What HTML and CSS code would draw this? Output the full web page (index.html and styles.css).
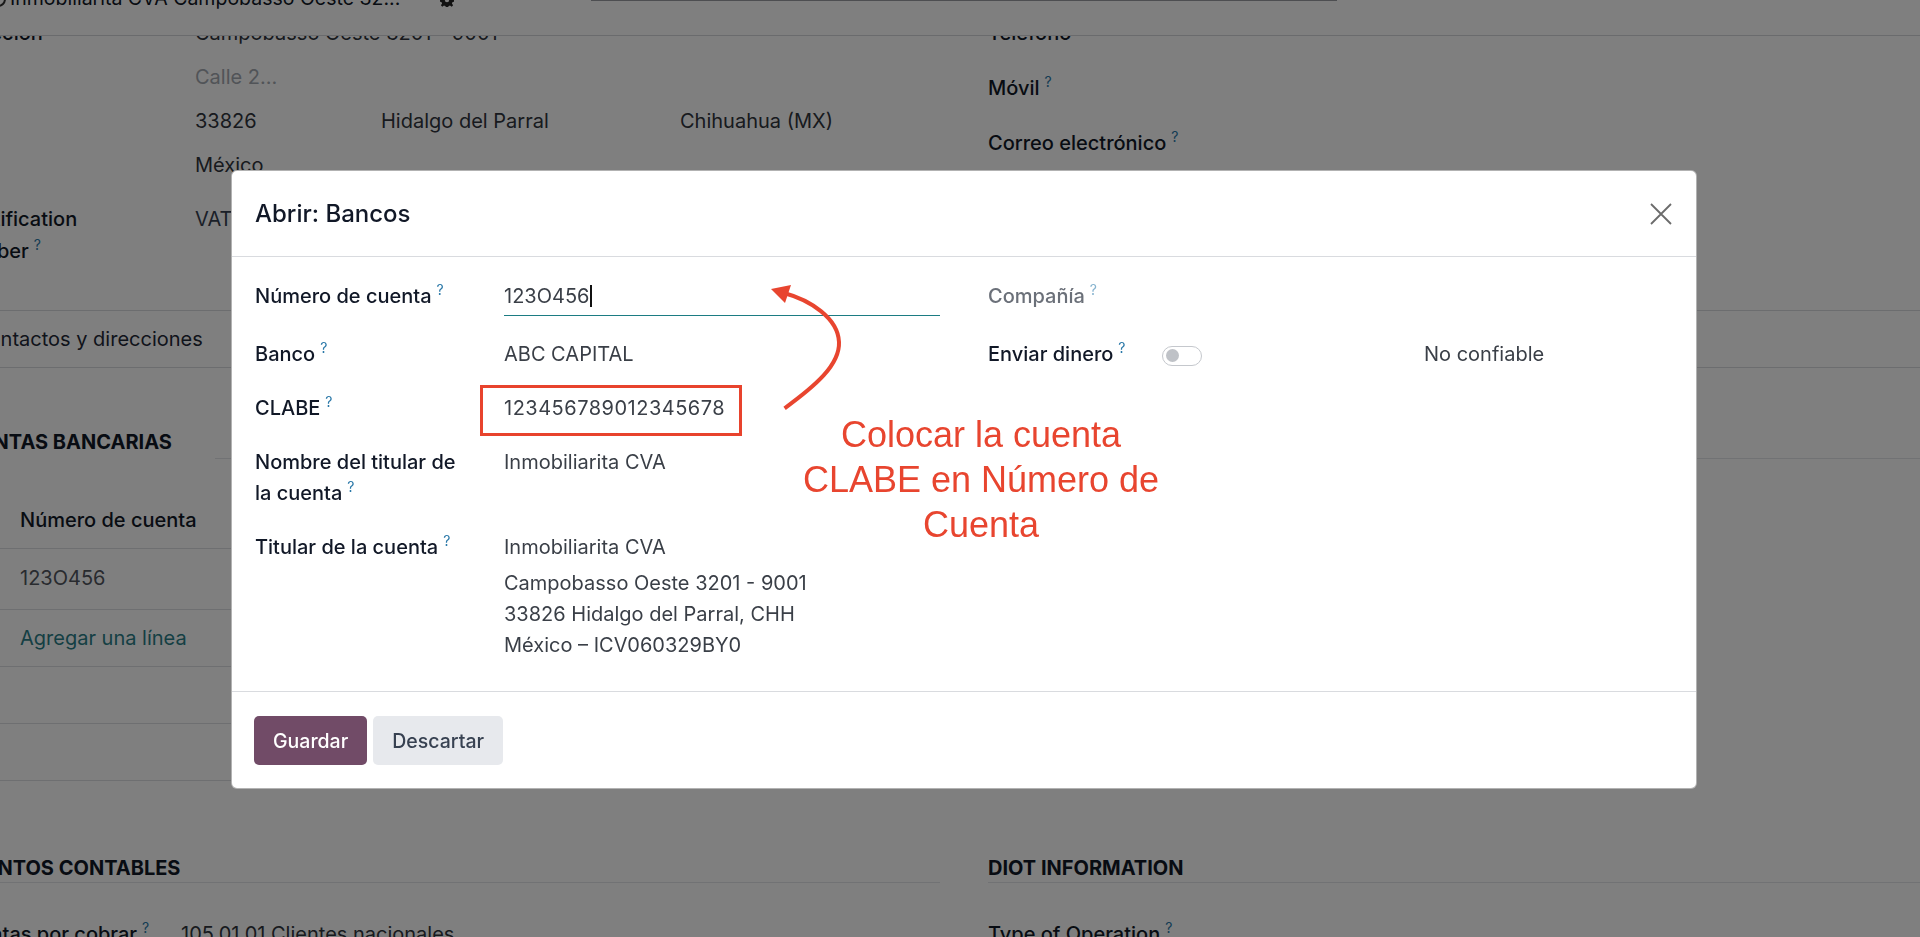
FILE: index.html
```html
<!DOCTYPE html>
<html lang="es">
<head>
    <meta charset="UTF-8">
    <meta name="viewport" content="width=device-width, initial-scale=1.0">
    <title>Abrir: Bancos</title>
    <link rel="stylesheet" href="styles.css">
</head>
<body>
    <!-- barra del registro (fija arriba) -->
    <div class="record-bar">
        <div class="record-name">
            <span class="record-icon"></span>
            <span>Inmobiliarita CVA Campobasso Oeste 32...</span>
        </div>
        <svg class="gear" width="14" height="14" viewBox="0 0 14 14">
            <path d="M6 0h2l.4 2 1.6.7 1.7-1.2 1.4 1.4-1.2 1.7.7 1.6 2 .4v2l-2 .4-.7 1.6 1.2 1.7-1.4 1.4-1.7-1.2-1.6.7-.4 2H6l-.4-2-1.6-.7-1.7 1.2-1.4-1.4 1.2-1.7-.7-1.6-2-.4V6l2-.4.7-1.6-1.2-1.7 1.4-1.4 1.7 1.2 1.6-.7z" fill="#222"/>
            <circle cx="7" cy="7" r="2.2" fill="#fff"/>
        </svg>
        <span class="record-field"></span>
    </div>

    <!-- hoja del formulario de contacto -->
    <div class="sheet">
        <div class="top-groups">
            <div class="group-left">
                <div class="field">
                    <div class="label addr-label">Dirección</div>
                    <div class="address">
                        <div class="addr-line">Campobasso Oeste 3201 - 9001</div>
                        <div class="addr-line placeholder">Calle 2...</div>
                        <div class="addr-line addr-split">
                            <span>33826</span>
                            <span>Hidalgo del Parral</span>
                            <span>Chihuahua (MX)</span>
                        </div>
                        <div class="addr-line">México</div>
                    </div>
                </div>
                <div class="field field-vat">
                    <div class="label">Identification Number<sup>?</sup></div>
                    <div>VAT</div>
                </div>
            </div>
            <div class="group-right">
                <div class="rfield">Teléfono</div>
                <div class="rfield">Móvil<sup>?</sup></div>
                <div class="rfield">Correo electrónico<sup>?</sup></div>
            </div>
        </div>

        <div class="tabs">
            <span class="tab">Contactos y direcciones</span>
        </div>

        <div class="bank">
            <div class="section-title">Cuentas bancarias</div>
            <div class="bank-rule"></div>
            <div class="bank-table">
                <div class="t-head">Número de cuenta</div>
                <div class="t-row t-row-first">123O456</div>
                <div class="t-row t-add">Agregar una línea</div>
                <div class="t-row"></div>
                <div class="t-row"></div>
            </div>
        </div>

        <div class="acct">
            <div class="acct-col">
                <div class="section-title acct-title">Asientos contables</div>
                <div class="acct-field">
                    <div class="label">Cuentas por cobrar<sup>?</sup></div>
                    <div>105.01.01 Clientes nacionales</div>
                </div>
            </div>
            <div class="acct-col">
                <div class="section-title acct-title">DIOT Information</div>
                <div class="acct-field">
                    <div class="label">Type of Operation<sup>?</sup></div>
                    <div></div>
                </div>
            </div>
        </div>
    </div>

    <div class="overlay"></div>

    <!-- diálogo -->
    <div class="modal">
        <div class="modal-header">
            <div class="modal-title">Abrir: Bancos</div>
            <svg class="close" width="22" height="22" viewBox="0 0 22 22">
                <path d="M1 1L21 21M21 1L1 21" stroke="#6b6b6b" stroke-width="1.8" fill="none"/>
            </svg>
        </div>
        <div class="modal-body">
            <div class="col">
                <div class="f-row">
                    <div class="f-label">Número de cuenta<sup>?</sup></div>
                    <div class="f-input">123O456<span class="caret"></span></div>
                </div>
                <div class="f-row">
                    <div class="f-label">Banco<sup>?</sup></div>
                    <div class="f-value">ABC CAPITAL</div>
                </div>
                <div class="f-row">
                    <div class="f-label">CLABE<sup>?</sup></div>
                    <div class="f-value"><span class="marked">123456789012345678</span></div>
                </div>
                <div class="f-row">
                    <div class="f-label">Nombre del titular de la cuenta<sup>?</sup></div>
                    <div class="f-value">Inmobiliarita CVA</div>
                </div>
                <div class="f-row">
                    <div class="f-label">Titular de la cuenta<sup>?</sup></div>
                    <div class="f-value">
                        <div class="holder-name">Inmobiliarita CVA</div>
                        <div>Campobasso Oeste 3201 - 9001</div>
                        <div>33826 Hidalgo del Parral, CHH</div>
                        <div>México – ICV060329BY0</div>
                    </div>
                </div>
            </div>
            <div class="col">
                <div class="f-row f-row-right f-row-tall">
                    <div class="f-label muted">Compañía<sup>?</sup></div>
                    <div></div>
                </div>
                <div class="f-row f-row-right">
                    <div class="f-label">Enviar dinero<sup>?</sup></div>
                    <div class="f-value send">
                        <span class="toggle"><span class="knob"></span></span>
                        <span>No confiable</span>
                    </div>
                </div>
            </div>
        </div>
        <div class="modal-footer">
            <button class="btn btn-primary">Guardar</button>
            <button class="btn btn-secondary">Descartar</button>
        </div>

        <!-- anotación sobre la captura -->
        <svg class="arrow" width="90" height="135" viewBox="0 0 90 135">
            <path d="M24.6 128.3C55 106 80 85 79 62C78 38 50 20 24 13" stroke="#e8452f" stroke-width="4" fill="none"/>
            <polygon points="11,9 31,5 25,23" fill="#e8452f"/>
        </svg>
        <div class="note">Colocar la cuenta<br>CLABE en Número de<br>Cuenta</div>
    </div>
</body>
</html>
```

FILE: styles.css
```css
* {
    box-sizing: border-box;
}
body {
    margin: 0;
    padding: 0;
    width: 1920px;
    height: 937px;
    overflow: hidden;
    background: #fff;
    font-family: "Inter", "Noto Sans", sans-serif;
    font-size: 20px;
    line-height: 31px;
    color: #374151;
}
sup {
    font-size: 14px;
    line-height: 0;
    vertical-align: baseline;
    position: relative;
    top: -8px;
    margin-left: 5px;
    color: #2a78a8;
    font-weight: 400;
}

/* barra superior */
.record-bar {
    position: fixed;
    top: 0;
    left: 0;
    right: 0;
    height: 36px;
    background: #fff;
    border-bottom: 1px solid #d4d6da;
    display: flex;
    align-items: flex-start;
    z-index: 1;
}
.record-name {
    width: 450px;
    margin-left: -10px;
    margin-top: -17px;
    display: flex;
    align-items: center;
    gap: 4px;
    color: #111827;
    white-space: nowrap;
    font-size: 19.5px;
}
.record-icon {
    width: 16px;
    height: 16px;
    border: 2px solid #333;
    border-radius: 50%;
}
.gear {
    margin-top: -7px;
}
.record-field {
    width: 746px;
    height: 1px;
    margin-left: 137px;
    background: #9a9da3;
}

/* hoja */
.sheet {
    margin-left: -48px;
    width: 1968px;
}
.label {
    font-weight: 500;
    color: #111827;
}
.top-groups {
    height: 310px;
    display: grid;
    grid-template-columns: 1036px 1fr;
}
.group-left {
    padding-top: 11px;
}
.field {
    display: grid;
    grid-template-columns: 195px 1fr;
    column-gap: 48px;
}
.addr-label {
    padding-top: 6.5px;
}
.addr-line {
    height: 44px;
    padding-top: 6.5px;
    color: #30353d;
}
.placeholder {
    color: #a3a8b0;
}
.addr-split {
    display: grid;
    grid-template-columns: 186px 299px auto;
}
.field-vat {
    margin-top: 15.5px;
    line-height: 32px;
}
.group-right {
    padding-top: 5.5px;
}
.rfield {
    height: 55px;
    line-height: 55px;
    font-weight: 500;
    color: #111827;
}

.tabs {
    height: 58px;
    padding-left: 22px;
    border-top: 1px solid #d8dade;
    border-bottom: 1px solid #d8dade;
}
.tab {
    display: inline-block;
    line-height: 56px;
    color: #1f2937;
}

.bank {
    margin-top: 58.5px;
}
.section-title {
    font-weight: 700;
    text-transform: uppercase;
    color: #111827;
}
.bank-rule {
    margin-left: 263px;
    border-top: 1px solid #e3e5e8;
}
.bank-table {
    width: 1348px;
    margin-top: 33px;
}
.t-head {
    height: 57px;
    line-height: 56px;
    padding-left: 68px;
    font-weight: 500;
    color: #111827;
    border-bottom: 1px solid #dcdee2;
}
.t-row {
    height: 57px;
    line-height: 56px;
    padding-left: 68px;
    border-bottom: 1px solid #dcdee2;
    color: #52575f;
}
.t-row-first {
    height: 61px;
    line-height: 58px;
}
.t-add {
    color: #2b7f88;
}

.acct {
    margin-top: 73px;
    display: grid;
    grid-template-columns: 1036px 1fr;
}
.acct-col:first-child {
    padding-right: 48px;
}
.acct-title {
    line-height: 28px;
    border-bottom: 1px solid #e3e5e8;
}
.acct-field {
    margin-top: 36px;
    display: grid;
    grid-template-columns: 181px 1fr;
    column-gap: 48px;
    white-space: nowrap;
    color: #30353d;
}

.overlay {
    position: fixed;
    inset: 0;
    background: rgba(0, 0, 0, 0.5);
    z-index: 2;
}

/* diálogo */
.modal {
    position: fixed;
    left: 231px;
    top: 170px;
    width: 1466px;
    height: 619px;
    background: #fff;
    border: 1px solid rgba(0, 0, 0, 0.3);
    border-radius: 6px;
    z-index: 3;
    display: flex;
    flex-direction: column;
}
.modal-header {
    height: 86px;
    padding: 0 24px 0 23px;
    border-bottom: 1px solid #d9dbdf;
    display: flex;
    align-items: center;
    justify-content: space-between;
}
.modal-title {
    font-size: 24px;
    font-weight: 500;
    color: #111827;
}
.modal-body {
    flex: 1;
    padding: 24px 23px 0;
    display: grid;
    grid-template-columns: 685px 1fr;
    column-gap: 48px;
    align-items: start;
}
.f-row {
    display: grid;
    grid-template-columns: 249px 1fr;
    margin-bottom: 23px;
}
.f-row-right {
    grid-template-columns: 174px 1fr;
}
.f-row-tall {
    min-height: 35px;
}
.f-label {
    padding-right: 34px;
    font-weight: 500;
    color: #111827;
}
.f-label.muted {
    color: #6b7079;
}
.f-label.muted sup {
    color: #86b3cf;
}
.f-value {
    color: #3a3f47;
}
.f-input {
    padding-bottom: 3px;
    border-bottom: 1px solid #1c7c83;
    color: #3a3f47;
}
.caret {
    display: inline-block;
    width: 1.5px;
    height: 22px;
    margin-left: 1px;
    vertical-align: -4px;
    background: #111;
}
.holder-name {
    margin-bottom: 5px;
}
.marked {
    position: relative;
    display: inline-block;
    letter-spacing: 0.5px;
}
.marked::after {
    content: "";
    position: absolute;
    top: -8px;
    bottom: -12px;
    left: -24px;
    right: -17px;
    border: 3px solid #e8432d;
}
.send {
    display: flex;
    align-items: center;
    height: 31px;
}
.toggle {
    width: 40px;
    height: 20px;
    margin: 2px 222px 0 0;
    padding-left: 3px;
    border: 1.5px solid #c5c8cd;
    border-radius: 10px;
    display: flex;
    align-items: center;
}
.knob {
    width: 13px;
    height: 13px;
    border-radius: 50%;
    background: #bfc2c7;
}
.arrow {
    position: absolute;
    left: 528px;
    top: 109px;
}
.note {
    position: absolute;
    left: 549px;
    top: 241px;
    width: 400px;
    text-align: center;
    font-family: "Liberation Sans", Arial, sans-serif;
    font-size: 36px;
    line-height: 45px;
    color: #e8452f;
}

.modal-footer {
    height: 97px;
    padding: 24px 22px 0;
    border-top: 1px solid #d9dbdf;
    display: flex;
    align-items: flex-start;
    gap: 6px;
}
.btn {
    height: 49px;
    padding: 0 19px;
    border: none;
    border-radius: 5px;
    font-family: "Inter", "Noto Sans", sans-serif;
    font-size: 19.5px;
    font-weight: 500;
}
.btn-primary {
    background: #714b67;
    color: #fff;
}
.btn-secondary {
    background: #e7e9ed;
    color: #374151;
}
```
